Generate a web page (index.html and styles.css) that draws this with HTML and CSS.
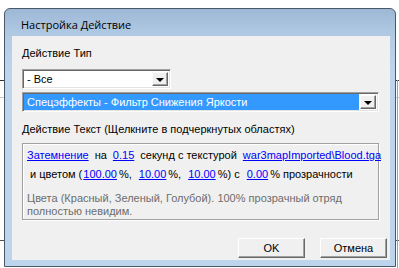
FILE: index.html
```html
<!DOCTYPE html>
<html lang="ru">
<head>
    <meta charset="UTF-8">
    <title>Настройка Действие</title>
    <link rel="stylesheet" href="styles.css">
</head>
<body>
    <div class="desktop">
        <!-- куски окна позади диалога -->
        <div class="back-line back-top"></div>
        <div class="back-line back-mid"></div>
        <div class="back-line back-low"></div>
        <div class="back-line back-right"></div>

        <div class="window">
            <div class="titlebar">Настройка Действие</div>
            <div class="client">
                <div class="label">Действие Тип</div>
                <div class="combo combo-small">
                    <div class="combo-text">- Все</div>
                    <div class="combo-btn"><span class="arrow"></span></div>
                </div>
                <div class="combo combo-wide">
                    <div class="combo-text selected">Спецэффекты - Фильтр Снижения Яркости</div>
                    <div class="combo-btn"><span class="arrow"></span></div>
                </div>

                <div class="label label-text">Действие Текст (Щелкните в подчеркнутых областях)</div>
                <div class="text-box">
                    <div class="line">
                        <a class="link">Затемнение</a>
                        <span>на</span>
                        <a class="link">0.15</a>
                        <span>секунд с текстурой</span>
                        <a class="link">war3mapImported\Blood.tga</a>
                    </div>
                    <div class="line line-two">
                        <span>и цветом (</span><a class="link tight">100.00</a><span>%,</span>
                        <a class="link">10.00</a><span>%,</span>
                        <a class="link">10.00</a><span>%) с</span>
                        <a class="link">0.00</a><span>% прозрачности</span>
                    </div>
                    <div class="hint">Цвета (Красный, Зеленый, Голубой). 100% прозрачный отряд полностью невидим.</div>
                </div>

                <div class="buttons">
                    <button class="btn">OK</button>
                    <button class="btn">Отмена</button>
                </div>
            </div>
        </div>
    </div>
</body>
</html>
```

FILE: styles.css
```css
body {
    margin: 0;
    background: #fff;
    font-family: "Liberation Sans", Arial, sans-serif;
    font-size: 11px;
    color: #000;
}
.desktop {
    position: relative;
    width: 399px;
    height: 268px;
    overflow: hidden;
    padding: 8px 0 0 4px;
    box-sizing: border-box;
}
.back-line {
    position: absolute;
    left: 0;
    width: 399px;
    height: 1px;
    background: #333;
}
.back-top {
    top: 80px;
}
.back-mid {
    top: 97px;
    background: #c8c8c8;
}
.back-low {
    top: 240px;
    background: #555;
}
.back-right {
    left: 397px;
    top: 80px;
    width: 1px;
    height: 188px;
    background: #a0a0a0;
}
.window {
    position: relative;
    width: 392px;
    height: 259px;
    box-sizing: border-box;
    border: 1px solid #4a5868;
    border-radius: 6px 6px 0 0;
    background: linear-gradient(to bottom, #9db8d6 0px, #b4cce6 30px, #bcd4ec 60px, #bcd4ec 100%);
    padding: 0 5px 6px 7px;
    display: flex;
    flex-direction: column;
}
.titlebar {
    height: 27px;
    line-height: 32px;
    padding-left: 9px;
    font-family: "Open Sans", "Liberation Sans", sans-serif;
    font-size: 11px;
    color: #000;
}
.client {
    flex: 1;
    background: #f0f0f0;
    padding: 10px 3px 0 10px;
    display: flex;
    flex-direction: column;
}
.label {
    height: 14px;
    line-height: 14px;
}
.combo {
    display: flex;
    height: 20px;
    box-sizing: border-box;
    background: #fff;
    border: 1px solid;
    border-color: #a0a0a0 #fff #fff #a0a0a0;
    box-shadow: inset 1px 1px 0 #696969, inset -1px -1px 0 #e3e3e3;
    padding: 2px;
}
.combo-small {
    width: 149px;
    margin-top: 9px;
}
.combo-wide {
    width: 357px;
    margin-top: 3px;
}
.combo-text {
    flex: 1;
    line-height: 14px;
    padding-left: 2px;
    white-space: nowrap;
    overflow: hidden;
}
.combo-text.selected {
    background: #3399ff;
    color: #fff;
    margin: -1px 1px -1px -1px;
    line-height: 16px;
    padding-left: 3px;
}
.combo-btn {
    width: 16px;
    box-sizing: border-box;
    background: #f0f0f0;
    border: 1px solid;
    border-color: #fff #696969 #696969 #fff;
    box-shadow: inset -1px -1px 0 #a0a0a0;
    display: flex;
    align-items: center;
    justify-content: center;
}
.arrow {
    width: 0;
    height: 0;
    border-left: 4px solid transparent;
    border-right: 4px solid transparent;
    border-top: 4px solid #000;
    margin-top: 1px;
}
.label-text {
    margin-top: 10px;
}
.text-box {
    width: 357px;
    height: 77px;
    box-sizing: border-box;
    margin-top: 7px;
    border: 1px solid #a0a0a0;
    box-shadow: inset 1px 1px 0 #fff, 1px 1px 0 #fff;
    padding: 4px 0 0 4px;
}
.line {
    display: flex;
    gap: 6px;
    height: 19px;
    line-height: 14px;
    white-space: nowrap;
}
.line-two {
    gap: 0;
    padding-left: 3px;
}
.line-two .link {
    margin: 0 2px 0 7px;
}
.line-two .link.tight {
    margin-left: 1px;
}
.link {
    color: #0000ff;
    text-decoration: underline;
}
.hint {
    margin-top: 6px;
    width: 320px;
    line-height: 13px;
    color: #6d6d6d;
}
.buttons {
    display: flex;
    justify-content: flex-end;
    gap: 15px;
    margin-top: 18px;
}
.btn {
    width: 67px;
    height: 20px;
    box-sizing: border-box;
    padding: 0;
    font-family: "Liberation Sans", Arial, sans-serif;
    font-size: 11px;
    color: #000;
    background: #f0f0f0;
    border: 1px solid;
    border-color: #fff #696969 #696969 #fff;
    box-shadow: inset -1px -1px 0 #a0a0a0;
}
```
